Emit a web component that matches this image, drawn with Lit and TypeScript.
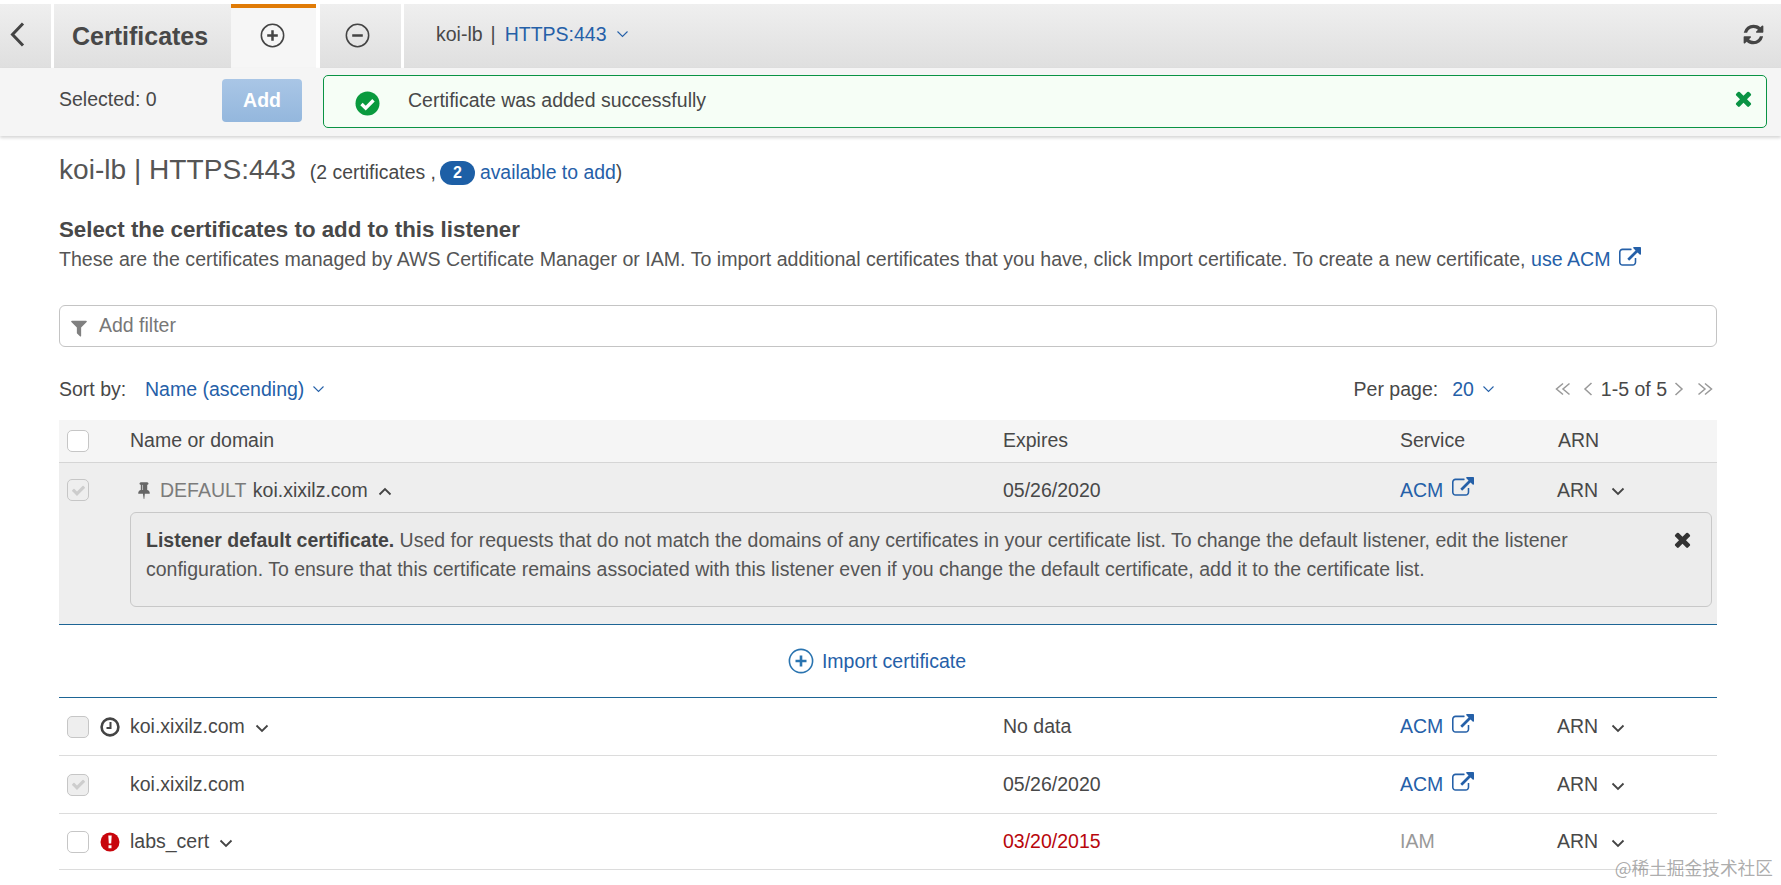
import { LitElement, html, css } from "lit";
import { customElement } from "lit/decorators.js";

const fa = (d: string, cls: string) => html`<svg class=${cls} viewBox="0 0 1792 1792" fill="currentColor"><path d=${d}></path></svg>`;
const EXT = "M1408 928v320q0 119-84.5 203.5t-203.5 84.5h-832q-119 0-203.5-84.5t-84.5-203.5v-832q0-119 84.5-203.5t203.5-84.5h704q14 0 23 9t9 23v64q0 14-9 23t-23 9h-704q-66 0-113 47t-47 113v832q0 66 47 113t113 47h832q66 0 113-47t47-113v-320q0-14 9-23t23-9h64q14 0 23 9t9 23zm384-864v512q0 26-19 45t-45 19-45-19l-176-176-652 652q-10 10-23 10t-23-10l-114-114q-10-10-10-23t10-23l652-652-176-176q-19-19-19-45t19-45 45-19h512q26 0 45 19t19 45z";
const REFRESH = "M1639 1056q0 5-1 7-64 268-268 434.5t-478 166.5q-146 0-282.5-55t-243.5-157l-129 129q-19 19-45 19t-45-19-19-45v-448q0-26 19-45t45-19h448q26 0 45 19t19 45-19 45l-137 137q71 66 161 102t187 36q134 0 250-65t186-179q11-17 53-117 8-23 30-23h192q13 0 22.5 9.5t9.5 22.5zm25-800v448q0 26-19 45t-45 19h-448q-26 0-45-19t-19-45 19-45l138-138q-148-137-349-137-134 0-250 65t-186 179q-11 17-53 117-8 23-30 23h-199q-13 0-22.5-9.5t-9.5-22.5v-7q65-268 270-434.5t480-166.5q146 0 284 55.5t245 156.5l130-129q19-19 45-19t45 19 19 45z";
const FILTER = "M1595 295q17 41-14 70l-493 493v742q0 42-39 59-13 5-25 5-27 0-45-19l-256-256q-19-19-19-45v-486l-493-493q-31-29-14-70 17-39 59-39h1280q42 0 59 39z";
const PIN = "M800 864v-448q0-14-9-23t-23-9-23 9-9 23v448q0 14 9 23t23 9 23-9 9-23zm672 352q0 26-19 45t-45 19h-429l-51 483q-2 12-10.5 20.5t-20.5 8.5h-1q-27 0-32-27l-76-485h-404q-26 0-45-19t-19-45q0-123 78.5-221.5t177.5-98.5v-512q-52 0-90-38t-38-90 38-90 90-38h640q52 0 90 38t38 90-38 90-90 38v512q99 0 177.5 98.5t78.5 221.5z";
const TIMES = "M1490 1322q0 40-28 68l-136 136q-28 28-68 28t-68-28l-294-294-294 294q-28 28-68 28t-68-28l-136-136q-28-28-28-68t28-68l294-294-294-294q-28-28-28-68t28-68l136-136q28-28 68-28t68 28l294 294 294-294q28-28 68-28t68 28l136 136q28 28 28 68t-28 68l-294 294 294 294q28 28 28 68z";
const CHECK = "M1671 566q0 40-28 68l-724 724-136 136q-28 28-68 28t-68-28l-136-136-362-362q-28-28-28-68t28-68l136-136q28-28 68-28t68 28l294 295 656-657q28-28 68-28t68 28l136 136q28 28 28 68z";

const chev = (up = false, cls = "chev") => html`<svg class=${cls} viewBox="0 0 14 9" fill="none" stroke="currentColor" stroke-width="1.8"><path d=${up ? "M1.5 7.5 7 2l5.5 5.5" : "M1.5 1.5 7 7l5.5-5.5"}></path></svg>`;
const thin = () => html`<svg class="thin" viewBox="0 0 12 8" fill="none" stroke="currentColor" stroke-width="1.1"><path d="M1 1.5 6 6.5l5-5"></path></svg>`;
const pagerDouble = (d: string, cls: string) => html`<svg class="pg ${cls}" viewBox="0 0 16 16" fill="none" stroke="currentColor" stroke-width="1.5"><path d=${d}></path></svg>`;
const pagerSingle = (d: string, cls: string) => html`<svg class="pg w ${cls}" viewBox="0 0 10 16" fill="none" stroke="currentColor" stroke-width="1.5"><path d=${d}></path></svg>`;
const extLink = () => fa(EXT, "ext");

const checkbox = (kind: "" | "dis" | "on") => html`<span class="cb ${kind}">${kind === "on" ? fa(CHECK, "tick") : ""}</span>`;

const circleBtn = (plus: boolean) => html`<svg class="circ" viewBox="0 0 26 26" fill="none" stroke="currentColor">
  <circle cx="13" cy="13" r="11.6" stroke-width="1.6"></circle>
  <path d=${plus ? "M7.5 13h11M13 7.5v11" : "M7.5 13h11"} stroke-width="2.6"></path></svg>`;

@customElement("app-root")
export class AppRoot extends LitElement {
  static styles = css`
    :host { display: block; position: relative; width: 1781px; height: 885px; overflow: hidden; background: #fff;
      font-family: "Liberation Sans", Arial, sans-serif; font-size: 19.5px; color: #484848; }
    a, .link { color: #2560a8; text-decoration: none; }
    svg { display: block; flex: none; }
    .topbar { margin-top: 4px; height: 64px; display: flex; gap: 3px; }
    .seg { background: linear-gradient(#efefef, #dfdfdf); display: flex; align-items: center; }
    .back { width: 51px; padding-left: 9px; box-sizing: border-box; padding-bottom: 3px; }
    .back svg { width: 17px; height: 27px; }
    .title { width: 177px; font-size: 25px; font-weight: 700; padding-left: 18px; box-sizing: border-box; padding-top: 1px; margin-right: -3px; }
    .tabs { display: flex; }
    .tab { width: 85px; justify-content: center; }
    .tab.on { background: #f6f6f6; border-top: 4px solid #e07b06; box-sizing: border-box; padding-bottom: 6px; padding-right: 2px; }
    .tab.off { width: 81px; margin-left: 4px; padding-bottom: 2px; padding-right: 7px; box-sizing: border-box; }
    .circ { width: 25px; height: 25px; color: #444; }
    .ctx { flex: 1; padding-left: 32px; padding-right: 16px; gap: 9px; padding-bottom: 4px; }
    .ctx .sp { flex: 1; }
    .pipe { margin-left: 8px; }
    .thin { width: 13px; height: 8px; color: #2560a8; }
    .refresh { width: 23px; height: 23px; color: #444; }

    .toolbar { height: 68px; background: #f5f5f5; box-shadow: 0 2px 3px rgba(0,0,0,.16); display: flex; align-items: center;
      padding: 0 14px 3px 59px; box-sizing: border-box; position: relative; }
    .sel { width: 163px; margin-top: -2px; }
    .add { width: 80px; height: 43px; border-radius: 4px; background: linear-gradient(#a9c6e6, #94b7dd); color: #fff; font-weight: 700;
      display: flex; align-items: center; justify-content: center; margin-right: 21px; padding-bottom: 1px; box-sizing: border-box; }
    .alert { flex: 1; height: 53px; margin-top: 2px; border: 1px solid #0a9344; border-radius: 5px; background: #f6fef6; box-sizing: border-box;
      display: flex; align-items: center; padding: 0 11px 0 31px; gap: 28px; }
    .alert .msg { flex: 1; margin-top: -2px; }
    .ok { width: 25px; height: 25px; margin-top: 3px; }
    .x-g { width: 23px; height: 23px; color: #0a9344; margin-top: -7px; }

    main { padding: 0 64px 0 59px; }
    .h1 { display: flex; align-items: baseline; margin-top: 18px; height: 32px; }
    .h1 .big { font-size: 28.1px; margin-right: 14px; color: #555; }
    .h1 .rest { display: flex; align-items: center; gap: 0; font-size: 19.4px; }
    .badge { background: #1d5fa6; color: #fff; font-weight: 700; border-radius: 12px; width: 35px; height: 24px; font-size: 16px;
      display: inline-flex; align-items: center; justify-content: center; margin: 0 5px 0 4px; }
    h2 { font-size: 22.3px; margin: 31px 0 0; font-weight: 700; line-height: 26px; }
    .desc { margin-top: 3px; line-height: 27px; display: flex; align-items: center; gap: 8px; color: #555; white-space: nowrap; font-size: 19.6px; }
    .ext { width: 22px; height: 22px; color: #2560a8; margin-top: -4px; }
    .filter { margin-top: 32px; height: 42px; border: 1px solid #c4c4c4; border-radius: 6px; box-sizing: border-box;
      display: flex; align-items: center; gap: 10px; padding-left: 9px; color: #777; }
    .filter span { margin-top: -2px; }
    .filter svg { width: 20px; height: 20px; color: #808080; margin-top: 3px; }
    .sort { display: flex; align-items: center; height: 42px; margin-top: 21px; }
    .sort .lbl { width: 86px; }
    .sort .thin { margin-left: 8px; }
    .sort .sp { flex: 1; }
    .sort .pp { margin-right: 14px; }
    .pager { display: flex; align-items: center; margin-left: 60px; margin-right: 4px; }
    .pg { width: 16px; height: 16px; color: #999; }
    .pg.w { width: 10px; }
    .pg.prev { margin-left: 12px; }
    .pager .cnt { margin: 0 7px 0 8px; }
    .pg.last { margin-left: 13px; }
    .grid { display: grid; grid-template-columns: 71px 873px 397px 157px 160px; align-items: center; }
    .head { background: #f5f5f5; height: 43px; border-bottom: 1px solid #d5d5d5; box-sizing: border-box; margin-top: 10px; padding-bottom: 1px; }
    .hdr-arn { margin-left: 1px; }
    .cell-c { display: flex; align-items: center; padding-left: 8px; gap: 11px; }
    .cb { width: 22px; height: 22px; border: 1px solid #c6c6c6; border-radius: 5px; background: #fff; box-sizing: border-box;
      display: flex; align-items: center; justify-content: center; flex: none; }
    .cb.dis, .cb.on { background: #eee; }
    .tick { width: 15px; height: 15px; color: #cdcdcd; }
    .exp { background: #eeeeee; height: 162px; border-bottom: 1px solid #1d6595; box-sizing: border-box; }
    .exp .grid { height: 49px; padding-top: 5px; box-sizing: border-box; }
    .name { display: flex; align-items: center; gap: 10px; }
    .chev { width: 14px; height: 9px; color: #444; margin-top: 3px; }
    .pin { width: 18px; height: 18px; color: #666; margin-left: 5px; margin-right: -3px; }
    .pair { display: flex; gap: 6.5px; }
    .muted { color: #7b7b7b; }
    .svc { display: flex; align-items: center; gap: 9px; }
    .arn { display: flex; align-items: center; gap: 13px; }
    .info { margin: 0 0 0 71px; width: 1582px; height: 95px; box-sizing: border-box; border: 1px solid #c8c8c8; border-radius: 6px; background: #ececec;
      padding: 13px 110px 0 15px; line-height: 29px; position: relative; color: #555; }
    .info b { color: #444; }
    .info .close { position: absolute; right: 17px; top: 15px; width: 23px; height: 23px; color: #333; }
    .imp { height: 73px; border-bottom: 1px solid #1d6595; box-sizing: border-box; display: flex; align-items: center; justify-content: center; gap: 8px; padding-right: 22px; }
    .imp .circ { color: #2a74b0; width: 26px; height: 26px; }
    .row { height: 58px; border-bottom: 1px solid #dcdcdc; box-sizing: border-box; }
    .row.last { height: 56px; }
    .ic { width: 20px; height: 20px; flex: none; }
    .red { color: #b8060c; }
    .iam { color: #999; }
    .wm { position: absolute; right: 8px; bottom: 7px; color: rgba(120,120,120,.62); font-size: 17.7px;
      font-family: "Noto Sans CJK SC", "Liberation Sans", sans-serif; line-height: 22px; }
  `;

  private acm() { return html`<span class="svc"><a>ACM</a>${extLink()}</span>`; }
  private arn() { return html`<span class="arn">ARN ${chev()}</span>`; }

  render() {
    return html`
      <div class="topbar">
        <div class="seg back"><svg viewBox="0 0 17 27" fill="none" stroke="#444" stroke-width="3"><path d="M14 2.5 3.5 13.5 14 24.5"></path></svg></div>
        <div class="seg title">Certificates</div>
        <div class="tabs">
          <div class="seg tab on">${circleBtn(true)}</div>
          <div class="seg tab off">${circleBtn(false)}</div>
        </div>
        <div class="seg ctx"><span>koi-lb<span class="pipe">|</span></span><a class="link">HTTPS:443</a>${thin()}<span class="sp"></span>${fa(REFRESH, "refresh")}</div>
      </div>
      <div class="toolbar">
        <span class="sel">Selected: 0</span>
        <span class="add">Add</span>
        <div class="alert">
          <svg class="ok" viewBox="0 0 25 25"><circle cx="12.5" cy="12.5" r="12" fill="#0a9a3e"></circle><path d="M6.5 13l4.2 4.2 7.8-8" fill="none" stroke="#fff" stroke-width="3.4"></path></svg>
          <span class="msg">Certificate was added successfully</span>
          ${fa(TIMES, "x-g")}
        </div>
      </div>
      <main>
        <div class="h1"><span class="big">koi-lb | HTTPS:443</span>
          <span class="rest">(2 certificates ,<span class="badge">2</span><a>available to add</a>)</span></div>
        <h2>Select the certificates to add to this listener</h2>
        <div class="desc"><span>These are the certificates managed by AWS Certificate Manager or IAM. To import additional certificates that you have, click Import certificate. To create a new certificate, <a>use ACM</a></span>${extLink()}</div>
        <div class="filter">${fa(FILTER, "")}<span>Add filter</span></div>
        <div class="sort">
          <span class="lbl">Sort by:</span><a>Name (ascending)</a>${thin()}
          <span class="sp"></span>
          <span class="pp">Per page:</span><a>20</a>${thin()}
          <span class="pager">
            ${pagerDouble("M8 2.5 1.5 8 8 13.5M14.5 2.5 8 8l6.5 5.5", "")}
            ${pagerSingle("M8.5 2 2 8l6.5 6", "prev")}
            <span class="cnt">1-5 of 5</span>
            ${pagerSingle("M1.5 2 8 8l-6.5 6", "")}
            ${pagerDouble("M1.5 2.5 8 8l-6.5 5.5M8 2.5l6.5 5.5L8 13.5", "last")}
          </span>
        </div>
        <div class="grid head">
          <div class="cell-c">${checkbox("")}</div><div>Name or domain</div><div>Expires</div><div>Service</div><div class="hdr-arn">ARN</div>
        </div>
        <div class="exp">
          <div class="grid">
            <div class="cell-c">${checkbox("on")}</div>
            <div class="name">${fa(PIN, "pin")}<span class="pair"><span class="muted">DEFAULT</span><span>koi.xixilz.com</span></span>${chev(true)}</div>
            <div>05/26/2020</div>${this.acm()}${this.arn()}
          </div>
          <div class="info"><b>Listener default certificate.</b> Used for requests that do not match the domains of any certificates in your certificate list. To change the default listener, edit the listener configuration. To ensure that this certificate remains associated with this listener even if you change the default certificate, add it to the certificate list.${fa(TIMES, "close")}</div>
        </div>
        <div class="imp">${circleBtn(true)}<a>Import certificate</a></div>
        <div class="grid row">
          <div class="cell-c">${checkbox("dis")}
            <svg class="ic" viewBox="0 0 20 20" fill="none" stroke="#444"><circle cx="10" cy="10" r="8.4" stroke-width="2.6"></circle><path d="M10.5 5v6H6.5" stroke-width="2"></path></svg>
          </div>
          <div class="name">koi.xixilz.com ${chev()}</div><div>No data</div>${this.acm()}${this.arn()}
        </div>
        <div class="grid row">
          <div class="cell-c">${checkbox("on")}</div>
          <div class="name">koi.xixilz.com</div><div>05/26/2020</div>${this.acm()}${this.arn()}
        </div>
        <div class="grid row last">
          <div class="cell-c">${checkbox("")}
            <svg class="ic" viewBox="0 0 20 20"><circle cx="10" cy="10" r="9.5" fill="#c8050c"></circle><path d="M8.3 3.5h3.4l-.5 8H8.8zM8.5 13.2h3v3h-3z" fill="#fff"></path></svg>
          </div>
          <div class="name">labs_cert ${chev()}</div><div class="red">03/20/2015</div><div class="iam">IAM</div>${this.arn()}
        </div>
      </main>
      <div class="wm">@稀土掘金技术社区</div>
    `;
  }
}
